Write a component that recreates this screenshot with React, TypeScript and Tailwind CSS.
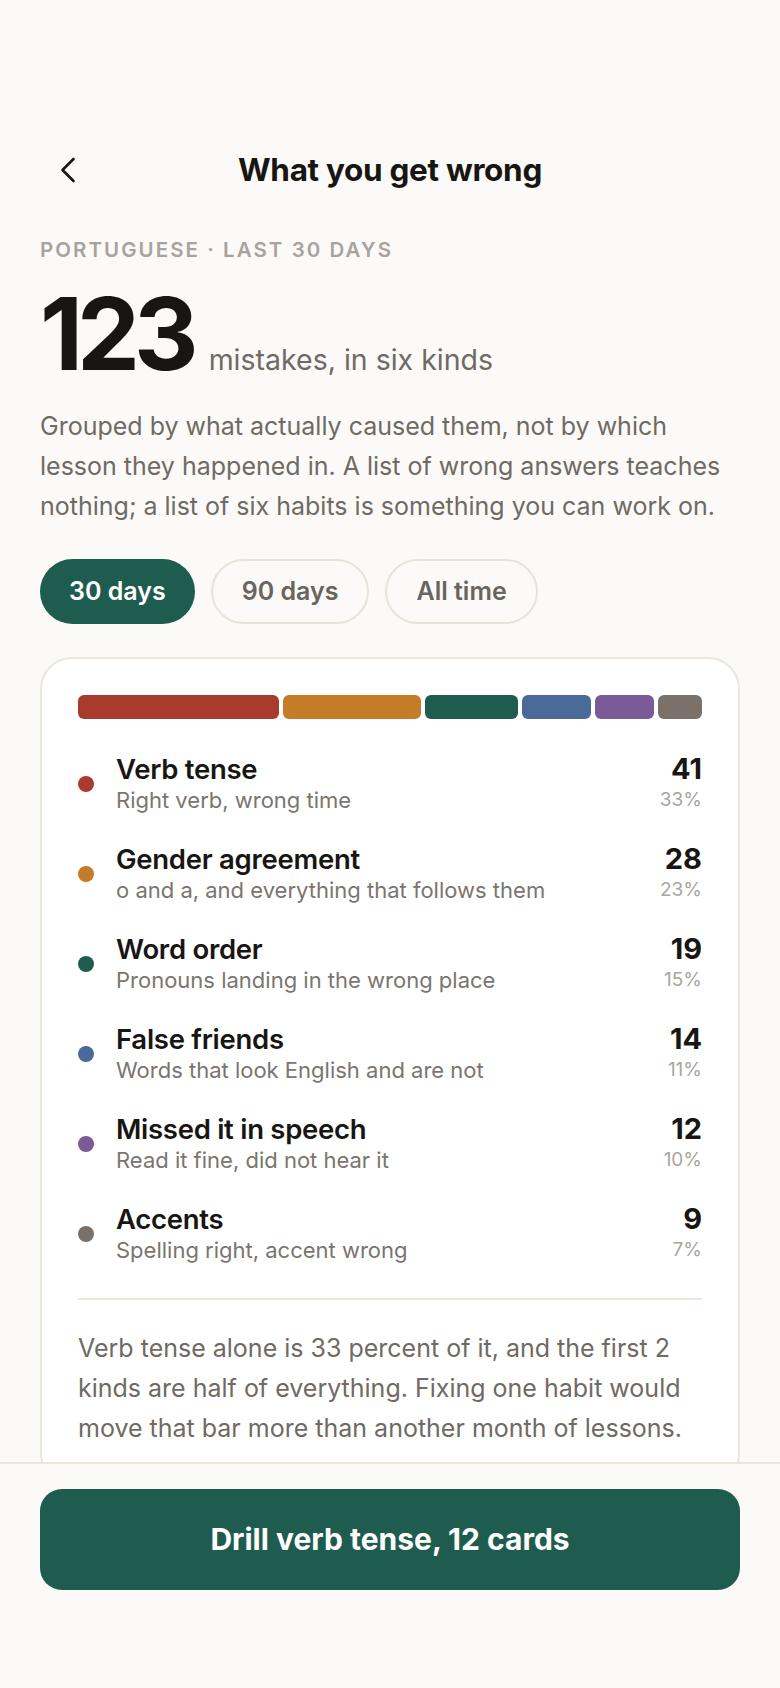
const kinds = [
  { name: 'Verb tense', note: 'Right verb, wrong time', count: 41, pct: '33%', dot: 'bg-[#a93b2e]' },
  { name: 'Gender agreement', note: 'o and a, and everything that follows them', count: 28, pct: '23%', dot: 'bg-[#c47c29]' },
  { name: 'Word order', note: 'Pronouns landing in the wrong place', count: 19, pct: '15%', dot: 'bg-[#1f5c50]' },
  { name: 'False friends', note: 'Words that look English and are not', count: 14, pct: '11%', dot: 'bg-[#4a6a9a]' },
  { name: 'Missed it in speech', note: 'Read it fine, did not hear it', count: 12, pct: '10%', dot: 'bg-[#7a5a97]' },
  { name: 'Accents', note: 'Spelling right, accent wrong', count: 9, pct: '7%', dot: 'bg-[#7a716a]' },
];

const ranges = ['30 days', '90 days', 'All time'];

export default function App() {
  return (
    <div className="relative min-h-[1688px] bg-[#fbfaf8] font-['Inter',sans-serif] text-[#181613]">
      <div className="px-10 pt-[142px] pb-[260px]">
        {/* header */}
        <div className="relative flex h-14 items-center justify-center">
          <button className="absolute left-[20px] top-1/2 -translate-y-1/2 text-[#181613]">
            <svg width="16" height="26" viewBox="0 0 16 26" fill="none">
              <path d="M13.5 2 L2.5 13 L13.5 24" stroke="currentColor" strokeWidth="2.6" strokeLinecap="round" strokeLinejoin="round" />
            </svg>
          </button>
          <h1 className="text-[31.5px] font-bold tracking-[-0.01em]">What you get wrong</h1>
        </div>

        <p className="mt-[38px] text-[20.5px] font-semibold uppercase leading-[28px] tracking-[0.1em] text-[#a8a39b]">
          Portuguese · Last 30 days
        </p>

        <div className="mt-[20px] flex items-baseline gap-4">
          <span className="text-[100px] font-bold leading-none tracking-[-0.06em]">123</span>
          <span className="text-[28.5px] text-[#6f6a63]">mistakes, in six kinds</span>
        </div>

        <p className="mt-[22px] text-[25px] leading-[40px] text-[#6f6a63]">
          Grouped by what actually caused them, not by which lesson they happened in. A list of wrong answers teaches
          nothing; a list of six habits is something you can work on.
        </p>

        {/* range pills */}
        <div className="mt-[33px] flex gap-[16px]">
          {ranges.map((r, i) => (
            <button
              key={r}
              className={`h-[65px] rounded-full px-[29px] text-[25px] font-semibold ${
                i === 0
                  ? 'bg-[#1f5c50] text-white'
                  : 'border-2 border-[#e8e3da] text-[#69645d]'
              }`}
            >
              {r}
            </button>
          ))}
        </div>

        {/* breakdown card */}
        <div className="mt-[33px] rounded-[32px] border-2 border-[#ebe7df] bg-white px-[36px] pt-[36px] pb-[36px]">
          <div className="flex h-6 gap-[4px]">
            {kinds.map((k) => (
              <div key={k.name} className={`rounded-[6px] ${k.dot}`} style={{ flexGrow: k.count, flexBasis: 0 }} />
            ))}
          </div>

          <div className="mt-[34px] flex flex-col gap-[28px]">
            {kinds.map((k) => (
              <div key={k.name} className="flex items-center gap-[22px]">
                <span className={`h-4 w-4 shrink-0 rounded-full ${k.dot}`} />
                <div className="min-w-0 flex-1">
                  <div className="text-[27.5px] font-semibold leading-[32px] tracking-[-0.01em]">{k.name}</div>
                  <div className="text-[22px] leading-[30px] text-[#7a756e]">{k.note}</div>
                </div>
                <div className="text-right">
                  <div className="text-[29px] font-bold leading-[32px]">{k.count}</div>
                  <div className="text-[19px] leading-[30px] text-[#aaa59e]">{k.pct}</div>
                </div>
              </div>
            ))}
          </div>

          <div className="mt-[33px] border-t-2 border-[#ebe7df]" />

          <p className="mt-[28px] text-[25px] leading-[40px] text-[#6f6a63]">
            Verb tense alone is 33 percent of it, and the first 2 kinds are half of everything. Fixing one habit would
            move that bar more than another month of lessons.
          </p>
        </div>
      </div>

      {/* bottom action */}
      <div className="fixed inset-x-0 bottom-0 h-[226px] border-t-2 border-[#ebe7df] bg-[#fbfaf8] px-10 pt-[25px]">
        <button className="flex h-[101px] w-full items-center justify-center rounded-[22px] bg-[#1f5c50] text-[30px] font-bold text-white">
          Drill verb tense, 12 cards
        </button>
      </div>
    </div>
  );
}
